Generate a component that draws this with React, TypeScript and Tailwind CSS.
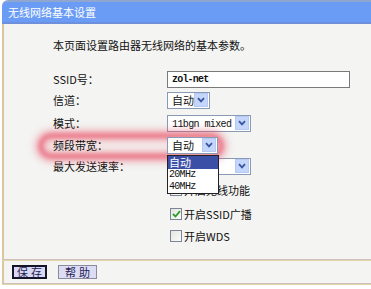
import React from "react";

const cjk = { fontFamily: '"Noto Sans CJK SC", "Noto Sans", sans-serif' };
const mono = { fontFamily: '"Liberation Mono", "DejaVu Sans Mono", monospace' };

function Arrow() {
  return (
    <div className="w-[14px] h-[14px] bg-[#c4d6fb] border border-[#b6c9f2] flex items-center justify-center">
      <svg width="8" height="6" viewBox="0 0 8 6">
        <path d="M1 1.2 L4 4.4 L7 1.2" fill="none" stroke="#3a55a0" strokeWidth="1.8" />
      </svg>
    </div>
  );
}

function Select({ w, children }: { w: string; children: React.ReactNode }) {
  return (
    <div className={`${w} h-[17px] bg-white border border-[#8a9ab4] flex items-center justify-between pl-[4px] pr-[1px]`}>
      <div className="text-[11px] leading-none text-[#111]">{children}</div>
      <Arrow />
    </div>
  );
}

function Checkbox({ checked }: { checked?: boolean }) {
  return (
    <div className="w-[12px] h-[12px] border border-[#7c8696] bg-gradient-to-br from-[#e4e4e0] to-[#fbfbf8] flex items-center justify-center">
      {checked && (
        <svg width="9" height="8" viewBox="0 0 9 8">
          <path d="M1 4 L3.5 6.5 L8 1.2" fill="none" stroke="#2f9b2f" strokeWidth="1.8" />
        </svg>
      )}
    </div>
  );
}

export default function App() {
  return (
    <div className="w-[371px] h-[289px] bg-white overflow-hidden relative" style={cjk}>
      <div className="ml-[2px]">
        {/* title bar */}
        <div className="h-[24px] rounded-tl-[6px] bg-[#6a9cf6] border-t-[2px] border-[#8ea6d0] border-b-[2px] border-b-[#6e90dc] flex items-center pl-[6px]">
          <span className="text-white text-[11px] leading-none">无线网络基本设置</span>
        </div>
        {/* panel */}
        <div className="h-[235px] border-l-2 border-[#dcc6a0] bg-[#f4f4f2] flex flex-col pl-[49px] text-[11px] text-[#111]">
          <div className="mt-[13px] h-[16px] flex items-center relative">本页面设置路由器无线网络的基本参数。</div>

          <div className="mt-[17px] h-[18px] flex items-center relative">
            <div className="w-[114px]">SSID号：</div>
            <div className="w-[183px] h-[17px] bg-white border border-[#7a7a7a] flex items-center pl-[4px]">
              <span className="text-[10px] font-bold tracking-[-0.8px] text-[#111]" style={mono}>zol-net</span>
            </div>
          </div>

          <div className="mt-[3px] h-[18px] flex items-center relative">
            <div className="w-[114px]">信道：</div>
            <Select w="w-[43px]">自动</Select>
          </div>

          <div className="mt-[5px] h-[18px] flex items-center relative">
            <div className="w-[114px]">模式：</div>
            <Select w="w-[84px]">
              <span className="text-[10px] tracking-[-0.6px]" style={mono}>11bgn mixed</span>
            </Select>
          </div>

          <div className="mt-[4px] h-[18px] flex items-center relative z-10">
            <div className="w-[114px]">频段带宽：</div>
            <Select w="w-[51px]">自动</Select>
          </div>

          <div className="mt-[3px] h-[18px] flex items-center relative">
            <div className="w-[114px]">最大发送速率：</div>
            <Select w="w-[84px]">&nbsp;</Select>
          </div>

          <div className="mt-[7px] h-[16px] flex items-center gap-[2px] pl-[117px] relative">
            <Checkbox />
            <span>开启无线功能</span>
          </div>
          <div className="mt-[8px] h-[16px] flex items-center gap-[2px] pl-[117px] relative">
            <Checkbox checked />
            <span>开启SSID广播</span>
          </div>
          <div className="mt-[6px] h-[16px] flex items-center gap-[2px] pl-[117px] relative">
            <Checkbox />
            <span>开启WDS</span>
          </div>
        </div>
        {/* divider */}
        <div className="h-[2px] border-t border-[#cbc4b8] border-b border-b-[#e6d3ae]" />
        {/* footer */}
        <div className="h-[22px] border-l-2 border-[#dcc6a0] bg-[#f4f4f2] flex items-center pl-[8px] gap-[11px]">
          <div className="w-[35px] h-[14px] border-2 border-[#15152a] bg-[#d8d8f2] flex items-center justify-center text-[11px] leading-none text-[#1c1c50] tracking-[3px] pl-[3px]">保存</div>
          <div className="w-[39px] h-[14px] border border-[#8a8aa0] bg-[#dcdcf4] flex items-center justify-center text-[11px] leading-none text-[#1c1c50] tracking-[3px] pl-[3px]">帮助</div>
        </div>
        <div className="h-[2px] border-t border-[#cbc4b8] border-b border-b-[#e6d3ae]" />
      </div>

      {/* red highlight glow */}
      <div className="absolute left-[39px] top-[134px] w-[184px] h-[24px] rounded-full border-[4px] border-[#e8465e]/75 blur-[2px] shadow-[0_0_6px_3px_rgba(232,60,85,0.5),inset_0_0_6px_3px_rgba(232,60,85,0.4)] pointer-events-none" />

      {/* dropdown list */}
      <div className="absolute left-[167px] top-[155px] w-[52px] h-[39px] bg-white border border-[#222] z-20 flex flex-col text-[11px] leading-none">
        <div className="h-[13px] bg-[#3c4fa6] text-white flex items-center pl-[1px]">自动</div>
        <div className="h-[12px] flex items-center pl-[1px] text-[#111]">
          <span className="text-[10px] tracking-[-0.7px]" style={mono}>20MHz</span>
        </div>
        <div className="h-[12px] flex items-center pl-[1px] text-[#111]">
          <span className="text-[10px] tracking-[-0.7px]" style={mono}>40MHz</span>
        </div>
      </div>
    </div>
  );
}
